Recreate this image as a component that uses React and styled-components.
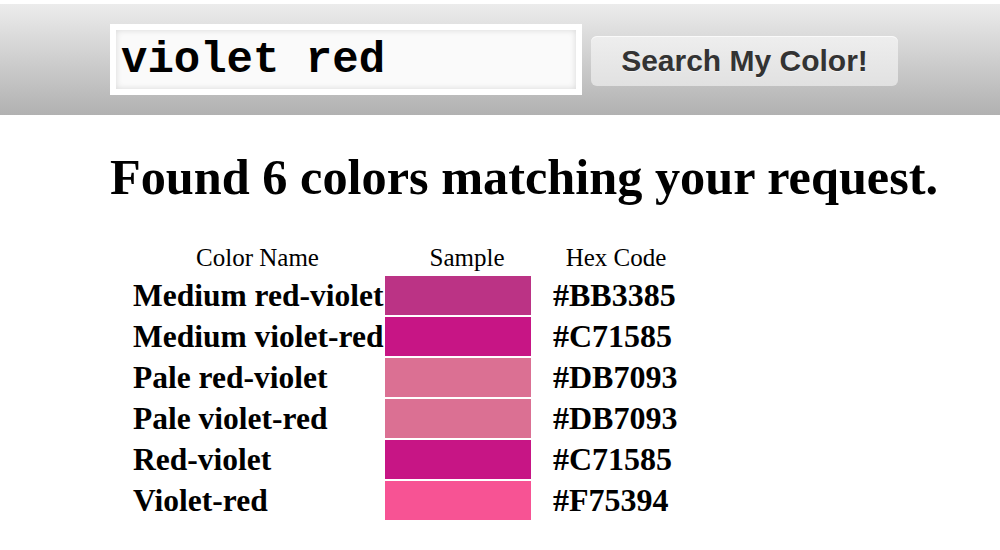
import React from "react";
import styled, { createGlobalStyle } from "styled-components";

const GlobalStyle = createGlobalStyle`
  html, body { margin: 0; padding: 0; background: #ffffff; }
  body { font-family: "Liberation Serif", "Times New Roman", serif; color: #000; }
`;

const Header = styled.header`
  margin-top: 4px;
  height: 111px;
  box-sizing: border-box;
  padding: 20px 0 20px 110px;
  display: flex;
  align-items: center;
  gap: 9px;
  background: linear-gradient(#ececec, #b1b1b1);
`;

const SearchInput = styled.input`
  box-sizing: border-box;
  width: 472px;
  height: 71px;
  border: 6px solid #ffffff;
  background: #fafafa;
  box-shadow: inset 0 0 6px rgba(0, 0, 0, 0.14);
  padding: 0 4px 0 5px;
  font-family: "Liberation Mono", "Courier New", monospace;
  font-weight: bold;
  font-size: 44px;
  color: #000;
  outline: none;
`;

const SearchButton = styled.button`
  box-sizing: border-box;
  width: 307px;
  height: 50px;
  margin-top: 3px;
  border: none;
  border-radius: 6px;
  background: linear-gradient(#eeeeee, #e1e1e1);
  box-shadow: inset 0 1px 0 rgba(255, 255, 255, 0.7);
  font-family: "Liberation Sans", Arial, sans-serif;
  font-weight: bold;
  font-size: 30px;
  color: #333333;
  text-shadow: 0 1px 0 rgba(255, 255, 255, 0.5);
  cursor: pointer;
`;

const Main = styled.main`
  padding-left: 110px;
`;

const Title = styled.h1`
  margin: 34px 0 35px 0;
  font-size: 50.3px;
  line-height: 1.15;
  font-weight: bold;
`;

const ColorGrid = styled.div`
  display: grid;
  grid-template-columns: 251px 164px 130px;
  column-gap: 2px;
  row-gap: 2px;
  margin-left: 22px;
`;

const HeadCell = styled.div`
  padding: 1px;
  font-size: 25px;
  line-height: 30px;
  text-align: center;
  white-space: nowrap;
`;

const NameCell = styled.div`
  padding: 1px;
  font-size: 31.5px;
  font-weight: bold;
  line-height: 37px;
  white-space: nowrap;
`;

const SampleCell = styled.div`
  display: flex;
`;

const Swatch = styled.div`
  width: 146px;
  background: ${(p) => p.$color};
`;

const HexCell = styled(NameCell)`
  font-size: 32px;
  padding-left: 2px;
`;

const colors = [
  ["Medium red-violet", "#BB3385"],
  ["Medium violet-red", "#C71585"],
  ["Pale red-violet", "#DB7093"],
  ["Pale violet-red", "#DB7093"],
  ["Red-violet", "#C71585"],
  ["Violet-red", "#F75394"],
];

export default function App() {
  return (
    <>
      <GlobalStyle />
      <Header>
        <SearchInput defaultValue="violet red" />
        <SearchButton>Search My Color!</SearchButton>
      </Header>
      <Main>
        <Title>Found 6 colors matching your request.</Title>
        <ColorGrid>
          <HeadCell>Color Name</HeadCell>
          <HeadCell>Sample</HeadCell>
          <HeadCell>Hex Code</HeadCell>
          {colors.map(([name, hex], i) => (
            <React.Fragment key={i}>
              <NameCell>{name}</NameCell>
              <SampleCell>
                <Swatch $color={hex} />
              </SampleCell>
              <HexCell>{hex}</HexCell>
            </React.Fragment>
          ))}
        </ColorGrid>
      </Main>
    </>
  );
}
